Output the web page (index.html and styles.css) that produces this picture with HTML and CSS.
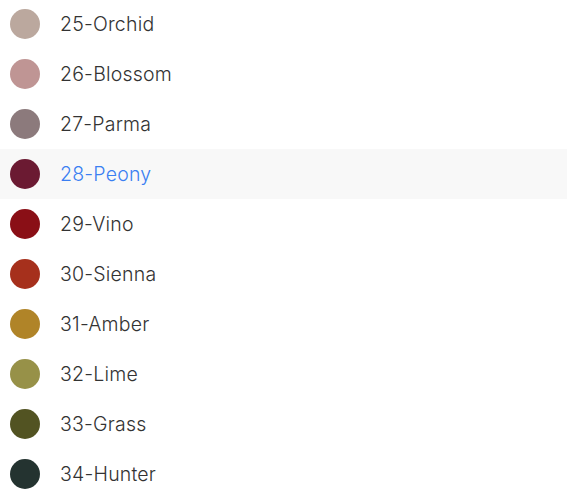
FILE: index.html
```html
<!DOCTYPE html>
<html>
<head>
<meta charset="utf-8">
<link rel="stylesheet" href="styles.css">
</head>
<body>
<ul class="swatches">
  <li class="swatch"><span class="dot c-orchid"></span><span class="name">25-Orchid</span></li>
  <li class="swatch"><span class="dot c-blossom"></span><span class="name">26-Blossom</span></li>
  <li class="swatch"><span class="dot c-parma"></span><span class="name">27-Parma</span></li>
  <li class="swatch active"><span class="dot c-peony"></span><span class="name">28-Peony</span></li>
  <li class="swatch"><span class="dot c-vino"></span><span class="name">29-Vino</span></li>
  <li class="swatch"><span class="dot c-sienna"></span><span class="name">30-Sienna</span></li>
  <li class="swatch"><span class="dot c-amber"></span><span class="name">31-Amber</span></li>
  <li class="swatch"><span class="dot c-lime"></span><span class="name">32-Lime</span></li>
  <li class="swatch"><span class="dot c-grass"></span><span class="name">33-Grass</span></li>
  <li class="swatch"><span class="dot c-hunter"></span><span class="name">34-Hunter</span></li>
</ul>
</body>
</html>
```
FILE: styles.css
```css
html, body {
  margin: 0;
  padding: 0;
  background: #fff;
  overflow: hidden;
}
.swatches {
  list-style: none;
  margin: -1px 0 0 0;
  padding: 0;
  font-family: "Inter", "Roboto", "Liberation Sans", sans-serif;
}
.swatch {
  display: flex;
  align-items: center;
  gap: 20px;
  height: 50px;
  padding-left: 10px;
  box-sizing: border-box;
}
.swatch.active {
  background: #f8f8f8;
}
.dot {
  width: 30px;
  height: 30px;
  border-radius: 50%;
  flex: none;
}
.name {
  font-size: 19.5px;
  font-weight: 300;
  color: #333;
  letter-spacing: 0.2px;
}
.active .name {
  color: #3b7ff2;
}
.c-orchid { background: #bba89e; }
.c-blossom { background: #bf9594; }
.c-parma { background: #8c7a7c; }
.c-peony { background: #6b1a32; }
.c-vino { background: #8a0f16; }
.c-sienna { background: #a6301c; }
.c-amber { background: #b08428; }
.c-lime { background: #979148; }
.c-grass { background: #525322; }
.c-hunter { background: #243330; }
```
